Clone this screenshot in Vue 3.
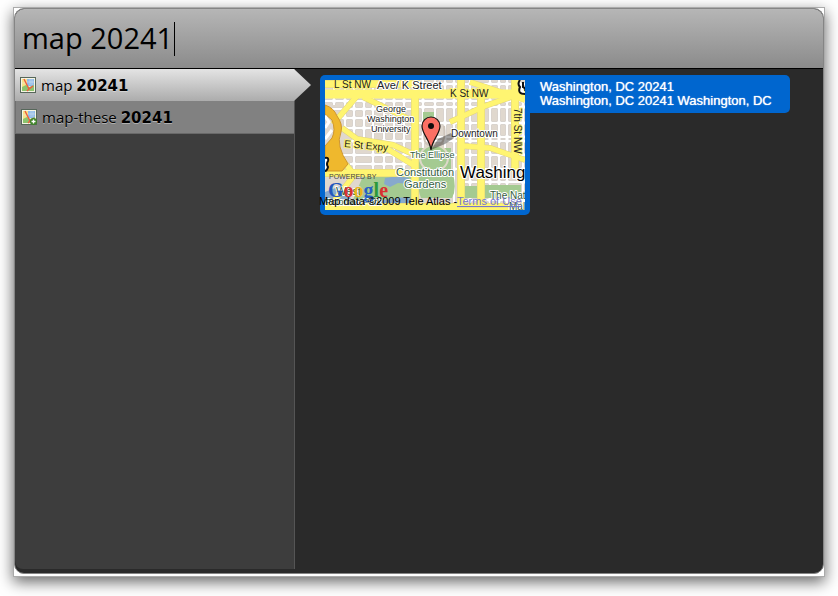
<template>
  <div class="page">
    <div class="frame">
      <main class="panel">
        <header class="command-bar">
          <input v-model="query" class="command-input" type="text" aria-label="Command" spellcheck="false" />
        </header>

        <div class="content">
          <nav class="suggestions">
            <button
              v-for="(item, index) in suggestions"
              :key="item.name"
              type="button"
              class="suggestion"
              :class="{ active: index === selected }"
              @click="selected = index"
            >
              <svg class="icon" viewBox="0 0 16 16">
                <rect x="0.5" y="0.5" width="15" height="15" fill="#f6f5e4" stroke="#56675a" />
                <rect x="2" y="2" width="5" height="8" fill="#f9e287" />
                <rect x="7" y="2" width="7" height="7" fill="#8fb9ea" />
                <path d="M2 10 6 8 9 10 14 8V14H2Z" fill="#8cc46e" />
                <path d="M10 2V8M12 2V8M7 5H14M2 6H7" stroke="#dce8ef" stroke-width="0.5" />
                <path d="M4 2 9 12 13 9M9 12 7 14" fill="none" stroke="#ee5b3e" stroke-width="1.4" />
                <g v-if="item.add">
                  <circle cx="12.5" cy="12.5" r="3.5" fill="#3f8429" />
                  <path d="M10.5 12.5H14.5M12.5 10.5V14.5" stroke="#fff" stroke-width="1.3" />
                </g>
              </svg>
              <span class="name">{{ item.name }} <b>{{ argument }}</b></span>
            </button>
          </nav>

          <section class="preview">
            <div class="map-card">
              <svg class="map" viewBox="0 0 200 130">
                <svg width="200" height="130">
                  <rect width="200" height="130" fill="#e0d8ce" />
                  <!-- side streets -->
                  <path :d="streets" class="street-edge" />
                  <path :d="streets" class="street" />
                  <!-- parks and water -->
                  <path d="M98 32H109V41H98ZM38 96H88V122H27ZM93 94H128Q132 109 127 118H96Q92 108 93 94ZM139 106H153V118H139ZM159 105H196V118H159Z" fill="#a4ca91" />
                  <path d="M94 68H126V92H94Z" fill="#a4ca91" />
                  <path d="M60 98 74 96 84 98V104L73 103 65 107 59 104ZM0 112 18 105 29 124 19 130H0ZM52 121 80 117 87 119V123L61 125Z" fill="#87a9cc" />
                  <ellipse cx="109" cy="78" rx="14" ry="13" fill="#a4ca91" stroke="#ded8c9" stroke-width="2" />
                  <path d="M101 48Q95 66 109 66Q122 66 119 46" fill="none" stroke="#cfc5ba" stroke-width="2" />
                  <!-- main roads -->
                  <path :d="diagonals" class="avenue-edge thin" />
                  <path :d="avenues" class="avenue-edge" />
                  <path :d="diagonals" class="avenue thin" />
                  <path :d="avenues" class="avenue" />
                  <path d="M0 14H200" class="avenue wide" />
                  <path d="M0 25Q9 28 12 36Q18 44 16 52Q13 59 15 67Q17 75 23 84L17 91H0V66L7 58Q11 50 7 40L0 34Z" fill="#efb82d" stroke="#cf962d" />
                  <path d="M0 36 4 42 0 48M0 59 7 50" fill="none" stroke="#fff" stroke-width="3" />
                  <path d="M0 78Q4 77 3 81Q1 84 3 87Q2 91 0 91" fill="#fff" stroke="#111" stroke-width="2" />
                  <path d="M195 0Q192 4 195 7Q192 14 200 14" fill="#fff" stroke="#111" stroke-width="2" />
                  <path d="M198 2V7Q201 8 200 11" fill="none" stroke="#111" stroke-width="2" />

                  <g class="labels">
                    <text
                      v-for="label in labels"
                      :key="label.text"
                      :x="label.x"
                      :y="label.y"
                      :class="label.kind"
                    >{{ label.text }}</text>
                    <text class="small" transform="translate(189 28) rotate(90)">7th St NW</text>
                    <text class="small" transform="translate(19 67) rotate(5)">E St Expy</text>
                  </g>

                  <!-- pin -->
                  <path d="M106 70 113 59 126 53 129 58 120 64Z" fill="#333" opacity="0.45" />
                  <path d="M106 70C105 60 97 54 97 46A9 9 0 0 1 115 46C115 54 107 60 106 70Z" fill="#fb7064" stroke="#17110f" stroke-width="1.2" />
                  <circle cx="106" cy="46" r="3" fill="#100c0b" />

                  <text x="4" y="99" class="powered">POWERED BY</text>
                  <text x="3" y="117" class="google"><tspan fill="#2457bd">G</tspan><tspan fill="#d93131">o</tspan><tspan fill="#e8b51e">o</tspan><tspan fill="#2860c4">g</tspan><tspan fill="#2b983b">l</tspan><tspan fill="#d93131">e</tspan></text>
                </svg>

                <text x="-6" y="125" class="credit">Map data ©2009 Tele Atlas -</text>
                <a href="#terms"><text x="132" y="125" class="credit terms">Terms of Use</text></a>
              </svg>
            </div>
            <p class="place">Washington, DC 20241<br />Washington, DC 20241 Washington, DC</p>
          </section>
        </div>
      </main>
    </div>
  </div>
</template>

<script setup>
import { computed, ref } from 'vue'

const query = ref('map 20241')
const selected = ref(0)

const argument = computed(() => query.value.split(' ').slice(1).join(' '))

const suggestions = [
  { name: 'map', add: false },
  { name: 'map-these', add: true }
]

const streets = [
  'M0 21H200M0 29H90M94 27H200M10 38H90M94 43H200M10 48H88M94 57H200M20 61H200',
  'M16 75H90M130 75H200M25 84H90M130 89H200M134 102H200M138 120H200M0 4H200',
  'M9 0V25M20 0V50M29 0V92M39 0V60M48 0V92M59 0V92M69 0V90M79 0V92',
  'M98 0V68M110 0V43M120 0V68M129 0V130M145 0V130M165 0V130M174 0V130M182 0V130M198 14V130'
].join('')

const avenues = 'M0 4H95M90 14V130M136 0V130M156 15V130M190 0V92M0 93H90M0 127H200'

const diagonals = [
  'M32 16 8 44M38 17 90 42M17 48 32 59 68 65 90 75M56 65 90 86M14 76 27 92',
  'M125 42 160 26 200 12M138 66 165 68 200 80M145 2 200 20M30 94 10 120'
].join('')

const labels = [
  { text: 'L St NW', x: 9, y: 8, kind: 'small' },
  { text: 'Ave/ K Street', x: 52, y: 9, kind: 'street-name' },
  { text: 'K St NW', x: 125, y: 17, kind: 'small' },
  { text: 'George', x: 51, y: 32, kind: 'area' },
  { text: 'Washington', x: 42, y: 42, kind: 'area' },
  { text: 'University', x: 46, y: 52, kind: 'area' },
  { text: 'Downtown', x: 126, y: 57, kind: 'road' },
  { text: 'The Ellipse', x: 85, y: 78, kind: 'area park' },
  { text: 'Constitution', x: 71, y: 96, kind: 'street-name park' },
  { text: 'Gardens', x: 79, y: 108, kind: 'street-name park' },
  { text: 'Washing', x: 135, y: 98, kind: 'city' },
  { text: 'The Nat', x: 165, y: 119, kind: 'road park' },
  { text: 'Mal', x: 184, y: 130, kind: 'road park' },
  { text: 'West', x: 11, y: 115, kind: 'street-name park' },
  { text: 'Potomac Park', x: 0, y: 125, kind: 'area park' }
]
</script>

<style>
body {
  margin: 0;
  background: #fff;
}
</style>

<style scoped>
* {
  box-sizing: border-box;
}

.page {
  display: flex;
  min-height: 100vh;
  padding: 7px 13px 19px;
  font-family: "Open Sans", "Liberation Sans", sans-serif;
  overflow: hidden;
}

.frame {
  display: flex;
  flex: 1;
  padding-bottom: 2px;
  background: #fff;
  border: 1px solid #aaa;
  box-shadow: 0 5px 14px rgba(0, 0, 0, 0.6);
}

.panel {
  display: flex;
  flex: 1;
  flex-direction: column;
  background: #2a2a2a;
  border: 1px solid #858585;
  border-radius: 10px;
  overflow: hidden;
}

.command-bar {
  display: flex;
  align-items: center;
  height: 60px;
  padding: 0 7px;
  background: linear-gradient(#b6b6b6, #8b8b8b);
  border-bottom: 1px solid #000;
}

.command-input {
  width: 153px;
  height: 34px;
  padding: 0 0 2px;
  font-family: inherit;
  font-size: 29px;
  line-height: 32px;
  color: #000;
  background: transparent;
  border: none;
  border-right: 1px solid #000;
  outline: none;
}

.content {
  display: flex;
  flex: 1;
  padding-bottom: 4px;
}

.suggestions {
  flex: 0 0 280px;
  background: #3d3d3d;
  border-right: 1px solid #555;
  border-bottom-left-radius: 8px;
}

.suggestion {
  position: relative;
  display: flex;
  align-items: center;
  gap: 5px;
  width: 100%;
  height: 33px;
  padding: 0 5px;
  font-family: inherit;
  font-size: 15px;
  line-height: 20px;
  color: #000;
  text-align: left;
  background: #818181;
  border: none;
  border-bottom: 1px solid #696969;
  border-left: 1px solid #6e6e6e;
  cursor: pointer;
}

.suggestion.active {
  height: 32px;
  background: linear-gradient(#e4e4e4, #acacac);
  border-bottom: none;
  border-left: none;
}

/* pointer towards the preview */
.suggestion.active::after {
  content: "";
  position: absolute;
  top: 0;
  left: 100%;
  width: 17px;
  height: 100%;
  background: inherit;
  clip-path: polygon(0 0, 100% 50%, 0 100%);
}

.icon {
  width: 16px;
  height: 16px;
}

.name {
  text-shadow: 0 1px 0 rgba(255, 255, 255, 0.4);
}

.name b {
  font-family: "DejaVu Sans", sans-serif;
}

.preview {
  display: flex;
  flex: 1;
  align-items: flex-start;
  padding: 6px 25px;
}

.map-card {
  padding: 5px;
  background: #0066cf;
  border-radius: 5px 0 5px 5px;
}

.map {
  display: block;
  width: 200px;
  height: 130px;
  overflow: visible;
  font-family: "Liberation Sans", sans-serif;
}

.place {
  width: 260px;
  margin: 0;
  padding: 5px 0 5px 10px;
  font-family: "Liberation Sans", sans-serif;
  font-size: 13px;
  line-height: 14px;
  color: #fff;
  text-shadow: 0 0 1px #fff;
  white-space: nowrap;
  background: #0066cf;
  border-radius: 0 5px 5px 0;
}

.street-edge,
.street,
.avenue-edge,
.avenue {
  fill: none;
}

.street-edge {
  stroke: #b3a89d;
  stroke-width: 4;
}

.street {
  stroke: #fff;
  stroke-width: 3;
}

.avenue-edge {
  stroke: #e0d37e;
  stroke-width: 8;
}

.avenue-edge.thin {
  stroke-width: 6;
}

.avenue {
  stroke: #fff571;
  stroke-width: 7;
}

.avenue.thin {
  stroke-width: 5;
}

.avenue.wide {
  stroke-width: 9;
}

.labels text {
  fill: #222;
  stroke: #fff;
  stroke-width: 2px;
  stroke-linejoin: round;
  paint-order: stroke;
}

.labels .small {
  font-size: 10px;
  stroke: #fff571;
}

.labels .area {
  font-size: 9px;
}

.labels .road {
  font-size: 10px;
}

.labels .street-name {
  font-size: 11px;
}

.labels .park {
  fill: #345d40;
}

.labels .city {
  font-size: 17px;
  fill: #000;
}

.powered {
  font-size: 7px;
  fill: #444;
}

.google {
  font-family: "Liberation Serif", serif;
  font-size: 20px;
  font-weight: bold;
}

.credit {
  font-size: 11px;
  fill: #000;
}

.terms {
  fill: #7777cc;
  text-decoration: underline;
}
</style>
